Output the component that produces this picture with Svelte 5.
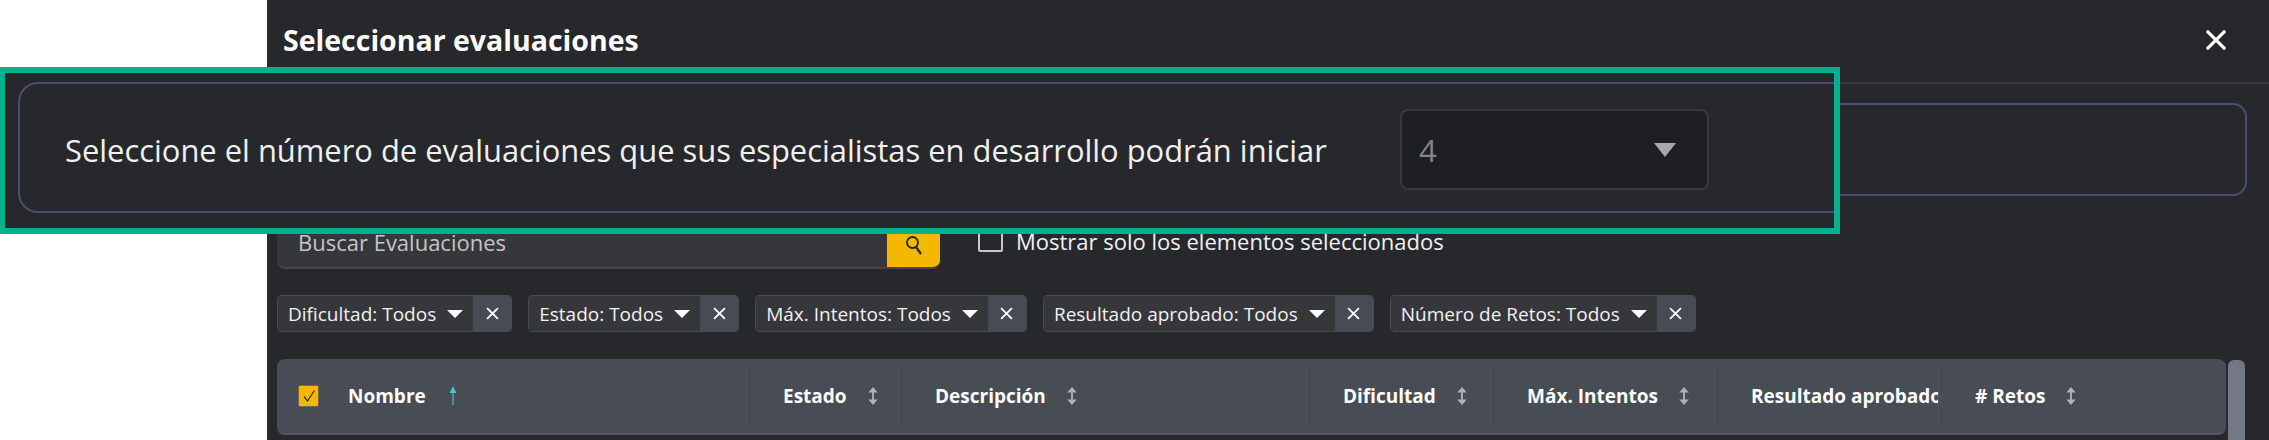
<script>
const filters = [
  'Dificultad: Todos',
  'Estado: Todos',
  'Máx. Intentos: Todos',
  'Resultado aprobado: Todos',
  'Número de Retos: Todos'
];

const columns = ['Estado', 'Descripción', 'Dificultad', 'Máx. Intentos', 'Resultado aprobado', '# Retos'];
</script>

{#snippet closeIcon(cls)}
  <svg class={cls} viewBox="0 0 24 24" preserveAspectRatio="none" aria-hidden="true">
    <path d="M2 2 22 22M22 2 2 22" fill="none" stroke="currentColor" stroke-width="3.4" />
  </svg>
{/snippet}

<div class="page">
  <div class="modal">
    <header class="modal-head">
      <h2>Seleccionar evaluaciones</h2>
      {@render closeIcon('head-close')}
    </header>

    <div class="outer-panel"></div>

    <div class="search-row">
      <div class="search">
        <span class="placeholder">Buscar Evaluaciones</span>
        <button class="search-btn" aria-label="Buscar">
          <svg viewBox="0 0 20 24" width="20" height="24">
            <circle cx="8.5" cy="7.5" r="5.5" fill="none" stroke="#222" stroke-width="1.8" />
            <path d="M12 12 17 19" stroke="#222" stroke-width="2.2" />
          </svg>
        </button>
      </div>
      <label class="only-selected">
        <span class="box"></span>
        Mostrar solo los elementos seleccionados
      </label>
    </div>

    <div class="filters">
      {#each filters as f}
        <div class="chip">
          <div class="chip-label">{f}<span class="caret"></span></div>
          <div class="chip-close">{@render closeIcon('chip-x')}</div>
        </div>
      {/each}
    </div>

    <div class="table-wrap">
      <div class="thead">
        <div class="th first">
          <span class="check">
            <svg viewBox="0 0 20 20" width="20" height="20">
              <path d="M5 10.5 8.5 15 15.5 4.5" fill="none" stroke="#3a3200" stroke-width="1.3" />
            </svg>
          </span>
          <span class="name">Nombre</span>
          <svg class="sort-up" viewBox="0 0 12 20" width="12" height="20">
            <path d="M6 19V3M3.5 6.5 6 1.5 8.5 6.5Z" fill="#4cc4d2" stroke="#4cc4d2" stroke-width="1.2" />
          </svg>
        </div>
        {#each columns as c}
          <div class="th">
            <span class="name">{c}</span>
            <svg class="sort" viewBox="0 0 14 20" width="12" height="20" preserveAspectRatio="none">
              <path d="M7 3V17" stroke="#b0b2b7" stroke-width="2.2" />
              <path d="M1.5 6.5 7 1 12.5 6.5ZM1.5 13.5 7 19 12.5 13.5Z" fill="#b0b2b7" />
            </svg>
          </div>
        {/each}
      </div>
      <div class="scrollbar"></div>
    </div>
  </div>

  <div class="highlight">
    <div class="highlight-panel">
      <span class="prompt">Seleccione el número de evaluaciones que sus especialistas en desarrollo podrán iniciar</span>
      <div class="select">
        <span>4</span>
        <span class="select-caret"></span>
      </div>
    </div>
  </div>
</div>

<style>
  :global(body) {
    margin: 0;
    background: #fff;
  }

  .page {
    position: relative;
    height: 440px;
    overflow: hidden;
    padding-left: 267px;
    font-family: "Open Sans", "Noto Sans", sans-serif;
    color: #fff;
  }

  .modal {
    height: 440px;
    background: #27282c;
    overflow: hidden;
  }

  .modal-head {
    height: 84px;
    box-sizing: border-box;
    border-bottom: 2px solid #3a3b3a;
    display: flex;
    align-items: center;
    justify-content: space-between;
    padding: 0 42px 2px 16px;
  }

  h2 {
    margin: 0;
    font-size: 28.5px;
    font-weight: 700;
  }

  .head-close {
    width: 22px;
    height: 22px;
    color: #fff;
  }

  .outer-panel {
    margin: 19px 22px 0 11px;
    height: 89px;
    border: 2px solid #4a4e70;
    border-radius: 14px;
  }

  .search-row {
    margin: 19px 0 0 10px;
    display: flex;
    gap: 38px;
  }

  .search {
    width: 663px;
    height: 54px;
    display: flex;
    justify-content: space-between;
    background: #36373b;
    border-radius: 8px;
    border-bottom: 2px solid #45474c;
    box-sizing: border-box;
    overflow: hidden;
  }

  .placeholder {
    padding: 12px 0 0 21px;
    font-size: 22px;
    color: #c4c5c7;
  }

  .search-btn {
    width: 53px;
    border: 0;
    padding: 13px 0 0;
    background: #f5b800;
    display: block;
    height: 54px;
  }

  .only-selected {
    height: 44px;
    margin-top: 4px;
    display: flex;
    align-items: center;
    gap: 13px;
    font-size: 22px;
    color: #f1f1f1;
  }

  .box {
    width: 21px;
    height: 18px;
    border: 2px solid #c9cacc;
    border-radius: 2px;
  }

  .filters {
    margin: 26px 0 0 10px;
    display: flex;
    gap: 16px;
  }

  .chip {
    height: 37px;
    display: flex;
    box-sizing: border-box;
    border: 1px solid #474b54;
    border-radius: 4px;
    overflow: hidden;
  }

  .chip-label {
    display: flex;
    align-items: center;
    padding: 0 10px 0 10px;
    background: #36373b;
    font-size: 19px;
    color: #f1f1f1;
    white-space: nowrap;
  }

  .caret {
    margin-left: 11px;
    border-left: 8px solid transparent;
    border-right: 8px solid transparent;
    border-top: 8px solid #fff;
  }

  .chip-close {
    width: 38px;
    display: flex;
    align-items: center;
    justify-content: center;
    background: #474b54;
  }

  .chip-x {
    width: 13px;
    height: 13px;
    color: #fff;
  }

  .table-wrap {
    margin: 27px 0 0 10px;
    display: flex;
    gap: 2px;
  }

  .thead {
    width: 1949px;
    height: 76px;
    box-sizing: border-box;
    display: grid;
    grid-template-columns: 469px 152px 408px 184px 224px 224px 288px;
    align-items: center;
    background: #484c55;
    border-bottom: 2px solid #53575f;
    border-radius: 8px;
  }

  .th {
    height: 54px;
    display: flex;
    align-items: center;
    padding-left: 36px;
    box-sizing: border-box;
    overflow: hidden;
    border-left: 1px solid #51555e;
    font-size: 19px;
    font-weight: 700;
    white-space: nowrap;
  }

  .th.first {
    padding-left: 21px;
    border-left: 0;
  }

  .name {
    color: #fff;
    flex: none;
  }

  .check {
    width: 21px;
    height: 22px;
    margin-right: 29px;
    display: block;
    background: #f5b800;
    border-radius: 2px;
    border: 1px solid #6d6a50;
    box-sizing: border-box;
  }

  .sort-up {
    margin-left: 21px;
    flex: none;
  }

  .sort {
    margin-left: 20px;
    flex: none;
  }

  .scrollbar {
    width: 17px;
    height: 90px;
    margin-top: 1px;
    background: #727884;
    border-radius: 6px;
  }

  .highlight {
    position: absolute;
    left: 0;
    top: 67px;
    width: 1840px;
    height: 167px;
    box-sizing: border-box;
    padding: 9px 0 0 13px;
    border: solid #05b08f;
    border-width: 6px;
    border-left-width: 5px;
    background: #27282c;
    overflow: hidden;
  }

  .highlight-panel {
    box-sizing: border-box;
    width: 2000px;
    height: 131px;
    padding: 4px 0 0 45px;
    display: flex;
    align-items: center;
    border: 2px solid #4a4e70;
    border-radius: 20px;
  }

  .prompt {
    width: 1335px;
    flex: none;
    font-size: 30.9px;
    color: #f0f0f0;
    white-space: nowrap;
  }

  .select {
    width: 309px;
    height: 81px;
    flex: none;
    box-sizing: border-box;
    padding: 0 31px 0 17px;
    display: flex;
    align-items: center;
    justify-content: space-between;
    background: #1e1f22;
    border: 2px solid #38393c;
    border-radius: 8px;
    font-size: 31px;
    color: #85868a;
  }

  .select-caret {
    border-left: 11px solid transparent;
    border-right: 11px solid transparent;
    border-top: 14px solid #a8a8a8;
  }
</style>
